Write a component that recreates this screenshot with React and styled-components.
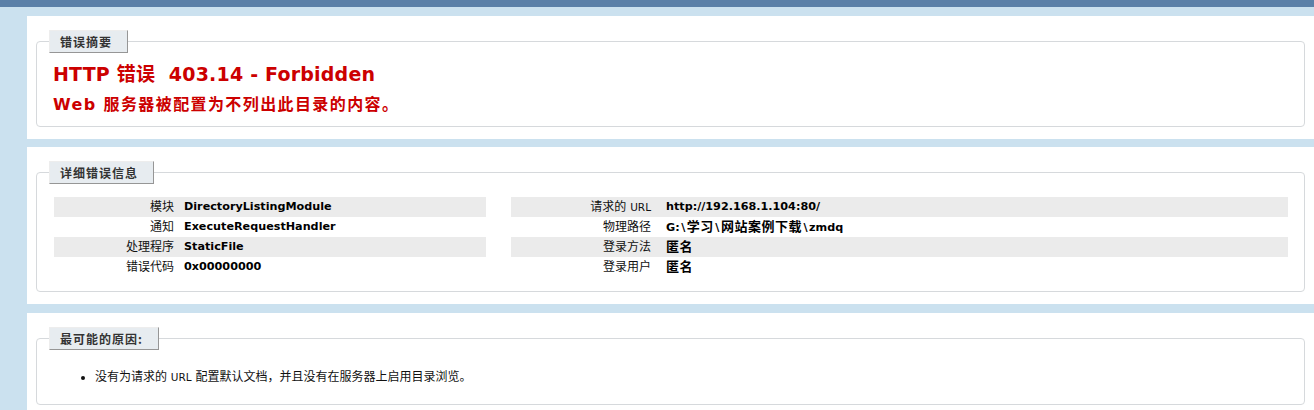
import React from "react";
import styled, { createGlobalStyle } from "styled-components";

const Global = createGlobalStyle`
  html, body { margin: 0; padding: 0; }
  body {
    background: #cbe1ef;
    font-family: "DejaVu Sans", Verdana, "Noto Sans CJK SC", sans-serif;
    font-size: 11.2px;
    color: #000;
    overflow: hidden;
  }
`;

const Header = styled.div`
  height: 7px;
  background: #5b80a8;
`;

const Content = styled.div`
  padding-left: 27px;
`;

const Panel = styled.div`
  background: #fff;
  margin-top: ${(p) => p.$top}px;
  padding: 10px 9px ${(p) => p.$bottom}px 9px;
`;

const Box = styled.fieldset`
  margin: 4px 0 0 0;
  padding: 0 16px ${(p) => p.$pb}px 17px;
  border: 1px solid #d6d9dc;
  border-radius: 4px;
  min-width: 0;
`;

const Legend = styled.legend`
  margin: 0 0 0 -5px;
  padding: 4px 15px 4px 10px;
  border-top: 1px solid #ededed;
  border-left: 1px solid #ededed;
  border-right: 1px solid #969696;
  border-bottom: 1px solid #969696;
  background: #e7ecf0;
  color: #333;
  font-weight: bold;
  font-size: 12px;
  letter-spacing: 1px;
  line-height: 13px;
  font-family: "Noto Sans CJK SC", "DejaVu Sans", sans-serif;
`;

const Title = styled.h2`
  margin: 10px 0 0 -1px;
  font-size: 19px;
  line-height: 22px;
  letter-spacing: 0.2px;
  color: #cc0000;
  font-weight: bold;
  white-space: pre;
`;

const Subtitle = styled.h3`
  margin: 10px 0 0 -1px;
  font-size: 16px;
  line-height: 19px;
  letter-spacing: 1.4px;
  color: #cc0000;
  font-weight: bold;
`;

const DetailsGrid = styled.div`
  display: grid;
  grid-template-columns: 432px 1fr;
  column-gap: 25px;
  margin-top: 13px;
  align-items: start;
`;

const Table = styled.div`
  display: flex;
  flex-direction: column;
`;

const Row = styled.div`
  display: grid;
  grid-template-columns: ${(p) => p.$labelWidth}px 1fr;
  height: 20px;
  align-items: center;
  background: ${(p) => (p.$alt ? "#ebebeb" : "transparent")};
`;

const Label = styled.div`
  text-align: right;
  font-size: 12px;
  line-height: 14px;
  color: #111;
  white-space: nowrap;
`;

const Small = styled.span`
  font-size: 10.5px;
  font-family: "DejaVu Sans", sans-serif;
`;

const Cjk = styled.span`
  font-size: 13px;
  font-family: "Noto Sans CJK SC", sans-serif;
  letter-spacing: 0.5px;
`;

const Slash = styled.span`
  margin: 0 1.5px;
`;

const Value = styled.div`
  padding-left: ${(p) => p.$gap}px;
  font-weight: bold;
  font-size: 11.2px;
  line-height: 14px;
  white-space: nowrap;
  color: #000;
`;

const Reasons = styled.ul`
  margin: 20px 0 10px 41px;
  padding: 0;
  list-style: disc outside;
`;

const Reason = styled.li`
  font-size: 12px;
  line-height: 15px;
  color: #111;
`;

const leftRows = [
  ["模块", "DirectoryListingModule"],
  ["通知", "ExecuteRequestHandler"],
  ["处理程序", "StaticFile"],
  ["错误代码", "0x00000000"],
];

const rightRows = [
  [<>请求的 <Small>URL</Small></>, "http://192.168.1.104:80/"],
  [
    "物理路径",
    <>
      G:<Slash>\</Slash><Cjk>学习</Cjk><Slash>\</Slash><Cjk>网站案例下载</Cjk><Slash>\</Slash>zmdq
    </>,
  ],
  ["登录方法", <Cjk>匿名</Cjk>],
  ["登录用户", <Cjk>匿名</Cjk>],
];

function DetailTable({ rows, labelWidth, gap }) {
  return (
    <Table>
      {rows.map(([label, value], i) => (
        <Row key={i} $alt={i % 2 === 0} $labelWidth={labelWidth}>
          <Label>{label}</Label>
          <Value $gap={gap}>{value}</Value>
        </Row>
      ))}
    </Table>
  );
}

export default function App() {
  return (
    <>
      <Global />
      <Header />
      <Content>
        <Panel $top={9} $bottom={12}>
          <Box $pb={12}>
            <Legend>错误摘要</Legend>
            <Title>{"HTTP 错误  403.14 - Forbidden"}</Title>
            <Subtitle>Web 服务器被配置为不列出此目录的内容。</Subtitle>
          </Box>
        </Panel>
        <Panel $top={8} $bottom={12}>
          <Box $pb={14}>
            <Legend>详细错误信息</Legend>
            <DetailsGrid>
              <DetailTable rows={leftRows} labelWidth={120} gap={10} />
              <DetailTable rows={rightRows} labelWidth={140} gap={15} />
            </DetailsGrid>
          </Box>
        </Panel>
        <Panel $top={9} $bottom={20}>
          <Box $pb={9}>
            <Legend>最可能的原因:</Legend>
            <Reasons>
              <Reason>没有为请求的 <Small>URL</Small> 配置默认文档，并且没有在服务器上启用目录浏览。</Reason>
            </Reasons>
          </Box>
        </Panel>
      </Content>
    </>
  );
}
